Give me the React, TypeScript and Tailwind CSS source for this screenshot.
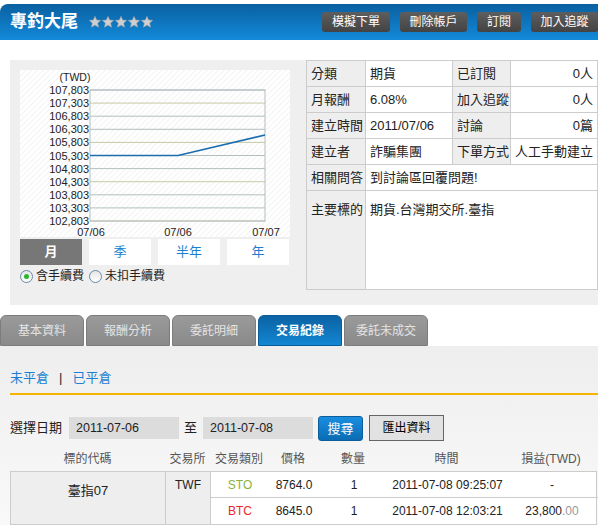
import React from 'react'

const font = "font-['Liberation_Sans','Noto_Sans_CJK_TC',sans-serif]"

const headerButtons = [
  { label: '模擬下單', w: 'w-[68px]' },
  { label: '刪除帳戶', w: 'w-[67px]' },
  { label: '訂閱', w: 'w-[44px]' },
  { label: '加入追蹤', w: 'w-[67px]' },
]

const tabs = ['基本資料', '報酬分析', '委託明細', '交易紀錄', '委託未成交']

const yLabels = ['107,803', '107,303', '106,803', '106,303', '105,803', '105,303', '104,803', '104,303', '103,803', '103,303', '102,803']

function Star() {
  return (
    <svg width="12" height="12" viewBox="0 0 12 12">
      <polygon
        points="6,0.4 7.6,4.1 11.6,4.4 8.6,7.1 9.5,11.2 6,9 2.5,11.2 3.4,7.1 0.4,4.4 4.4,4.1"
        fill="#cfcfcf"
        stroke="#a9a9a9"
        strokeWidth="0.6"
      />
    </svg>
  )
}

function Chart() {
  const top = 20
  const step = 13.1
  return (
    <svg width="270" height="167" viewBox="0 0 270 167" fontFamily="'Liberation Sans', Arial, sans-serif">
      <defs>
        <pattern id="diag" width="4" height="4" patternUnits="userSpaceOnUse" patternTransform="rotate(45)">
          <rect width="4" height="4" fill="#ffffff" />
          <rect width="1" height="4" fill="#f3f3f3" />
        </pattern>
      </defs>
      <rect width="270" height="167" fill="url(#diag)" />
      <text x="55" y="11" fontSize="10.5" textAnchor="middle" fill="#222">(TWD)</text>
      {yLabels.map((l, i) => {
        const y = top + i * step
        return (
          <g key={l}>
            <line x1="70" x2="245" y1={y} y2={y} stroke={i % 3 === 1 ? '#c9c9a6' : '#b3bfbf'} strokeWidth="1" />
            <text x="69" y={y + 4} fontSize="11" textAnchor="end" fill="#222">{l}</text>
          </g>
        )
      })}
      <rect x="70" y={top} width="175" height={step * 10} fill="none" stroke="#b3bfbf" />
      <polyline points="70,85.5 158,85.5 245,65" fill="none" stroke="#1a6db0" strokeWidth="1.6" />
      <text x="71" y="166" fontSize="11" textAnchor="middle" fill="#222">07/06</text>
      <text x="158" y="166" fontSize="11" textAnchor="middle" fill="#222">07/06</text>
      <text x="246" y="166" fontSize="11" textAnchor="middle" fill="#222">07/07</text>
    </svg>
  )
}

function Radio({ checked, label }: { checked?: boolean; label: string }) {
  return (
    <label className="flex items-center gap-[3px]">
      <span className="flex h-[13px] w-[13px] items-center justify-center rounded-full border border-[#6a88a8] bg-gradient-to-b from-[#e6e6e6] to-white">
        {checked && <span className="h-[5px] w-[5px] rounded-full bg-[#2db52d]" />}
      </span>
      <span className="text-[12px] text-[#222]">{label}</span>
    </label>
  )
}

export default function App() {
  const cell = 'border border-[#cccccc] h-[26px] px-1 text-[13px] text-[#222] whitespace-nowrap'
  const label = `${cell} bg-[#eeeeee]`

  return (
    <div className={`w-[598px] h-[525px] overflow-hidden bg-white ${font}`}>
      {/* Header */}
      <div className="mt-1 flex h-9 items-center rounded-tl-lg bg-gradient-to-b from-[#0a60a0] to-[#138ada] pl-2.5">
        <h1 className="text-[17px] font-bold text-white">專釣大尾</h1>
        <div className="ml-[11px] flex gap-[1px]">
          {[0, 1, 2, 3, 4].map((i) => <Star key={i} />)}
        </div>
        <div className="ml-auto flex gap-2.5">
          {headerButtons.map((b) => (
            <button
              key={b.label}
              className={`${b.w} h-5 rounded-[3px] bg-gradient-to-b from-[#5e5e5e] to-[#434343] text-[12px] text-white`}
            >
              {b.label}
            </button>
          ))}
        </div>
      </div>

      {/* Chart + info */}
      <div className="ml-2.5 mt-5 flex h-[245px] bg-[#efefef]">
        <div className="pl-2.5 pt-2.5">
          <Chart />
          <div className="mt-0.5 flex gap-[7px]">
            <button className="h-[26px] w-[62px] bg-[#777777] text-[13px] font-bold text-white">月</button>
            {['季', '半年', '年'].map((p) => (
              <button key={p} className="h-[26px] w-[62px] bg-white text-[13px] text-[#1a7fd0]">{p}</button>
            ))}
          </div>
          <div className="mt-1 flex h-[14px] items-center gap-[5px]">
            <Radio checked label="含手續費" />
            <Radio label="未扣手續費" />
          </div>
        </div>

        <table className="ml-4 h-fit w-[291px] table-fixed border-collapse bg-white">
          <colgroup>
            <col className="w-[59px]" />
            <col className="w-[87px]" />
            <col className="w-[58px]" />
            <col className="w-[87px]" />
          </colgroup>
          <tbody>
            <tr>
              <td className={label}>分類</td>
              <td className={cell}>期貨</td>
              <td className={label}>已訂閱</td>
              <td className={`${cell} text-right`}>0人</td>
            </tr>
            <tr>
              <td className={label}>月報酬</td>
              <td className={cell}>6.08%</td>
              <td className={label}>加入追蹤</td>
              <td className={`${cell} text-right`}>0人</td>
            </tr>
            <tr>
              <td className={label}>建立時間</td>
              <td className={cell}>2011/07/06</td>
              <td className={label}>討論</td>
              <td className={`${cell} text-right`}>0篇</td>
            </tr>
            <tr>
              <td className={label}>建立者</td>
              <td className={cell}>詐騙集團</td>
              <td className={label}>下單方式</td>
              <td className={`${cell} text-right`}>人工手動建立</td>
            </tr>
            <tr>
              <td className={label}>相關問答</td>
              <td className={`${cell} text-[#1a7fd0]`} colSpan={3}>到討論區回覆問題!</td>
            </tr>
            <tr>
              <td className={`${label} h-[99px] pt-[9px] align-top`}>主要標的</td>
              <td className={`${cell} h-[99px] pt-[9px] align-top`} colSpan={3}>期貨.台灣期交所.臺指</td>
            </tr>
          </tbody>
        </table>
      </div>

      {/* Tabs */}
      <div className="mt-2.5 flex h-[31px] items-end gap-[2px]">
        {tabs.map((t) => {
          const active = t === '交易紀錄'
          return (
            <div
              key={t}
              className={`flex h-[31px] w-[84px] items-center justify-center rounded-t-md border text-[12px] ${
                active
                  ? 'border-[#0a5c98] bg-gradient-to-b from-[#0b63a3] to-[#1386d3] font-bold text-white'
                  : 'border-[#7c7c7c] bg-gradient-to-b from-[#9a9a9a] to-[#8a8a8a] text-[#e4e4e4]'
              }`}
            >
              {t}
            </div>
          )
        })}
      </div>

      {/* Trade records */}
      <div className="h-[179px] bg-gradient-to-b from-[#eeeeee] to-[#f9f9f9] pl-2.5">
        <div className="flex h-[47px] items-end pb-[6px] text-[13px]">
          <span className="text-[#1a7fd0]">未平倉</span>
          <span className="mx-2.5 text-[#222]">|</span>
          <span className="text-[#1a7fd0]">已平倉</span>
        </div>
        <div className="h-[2px] bg-[#f6b400]" />

        <div className="mt-5 flex h-[26px] items-center">
          <span className="text-[13px] text-[#222]">選擇日期</span>
          <div className="ml-[7px] flex h-[22px] w-[110px] items-center bg-[#dcdcdc] pl-[7px] text-[12.5px] text-[#222]">2011-07-06</div>
          <span className="ml-[5px] text-[13px] text-[#222]">至</span>
          <div className="ml-[6px] flex h-[22px] w-[110px] items-center bg-[#dcdcdc] pl-[7px] text-[12.5px] text-[#222]">2011-07-08</div>
          <button className="ml-[5px] h-[25px] w-[45px] rounded-[3px] border border-[#0b5e9c] bg-gradient-to-b from-[#1a8ee0] to-[#0b6cb4] pt-[2px] text-[13px] text-white">搜尋</button>
          <button className="ml-1.5 h-[26px] w-[75px] border border-[#666666] bg-[#e2e2e2] text-[12px] text-black">匯出資料</button>
        </div>

        <div className="mt-1.5 grid h-6 grid-cols-[155px_45px_58px_50px_70px_117px_92px] items-center text-center text-[12px] text-[#555]">
          <span>標的代碼</span>
          <span>交易所</span>
          <span>交易類別</span>
          <span>價格</span>
          <span>數量</span>
          <span>時間</span>
          <span>損益(TWD)</span>
        </div>

        <div className="grid w-[587px] grid-cols-[155px_45px_58px_50px_70px_117px_92px] grid-rows-[26px_26px] border border-[#cccccc] bg-white text-center text-[12px] text-[#222]">
          <div className="row-span-2 border-r border-[#cccccc] bg-[#eeeeee] pt-[9px] text-[13px]">臺指07</div>
          <div className="row-span-2 border-r border-[#cccccc] bg-[#eeeeee] pt-[4px]">TWF</div>
          <div className="flex items-center justify-center border-b border-[#cccccc] text-[#8cb23a]">STO</div>
          <div className="flex items-center justify-center border-b border-[#cccccc]">8764.0</div>
          <div className="flex items-center justify-center border-b border-[#cccccc]">1</div>
          <div className="flex items-center justify-center border-b border-[#cccccc]">2011-07-08 09:25:07</div>
          <div className="flex items-center justify-center border-b border-[#cccccc]">-</div>
          <div className="flex items-center justify-center text-[#e8262a]">BTC</div>
          <div className="flex items-center justify-center">8645.0</div>
          <div className="flex items-center justify-center">1</div>
          <div className="flex items-center justify-center">2011-07-08 12:03:21</div>
          <div className="flex items-center justify-center">
            23,800<span className="text-[#999999]">.00</span>
          </div>
        </div>
      </div>
    </div>
  )
}
